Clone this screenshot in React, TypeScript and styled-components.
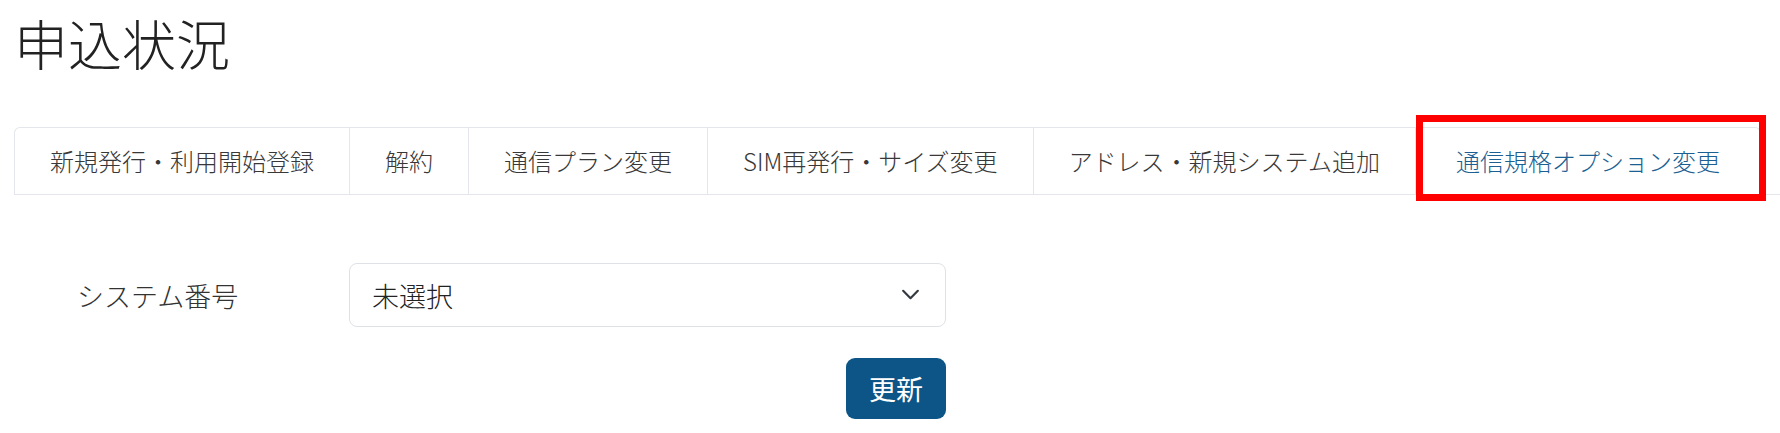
import React, { useState } from "react";
import styled, { createGlobalStyle } from "styled-components";

const tabs = [
  "新規発行・利用開始登録",
  "解約",
  "通信プラン変更",
  "SIM再発行・サイズ変更",
  "アドレス・新規システム追加",
  "通信規格オプション変更",
];

const GlobalStyle = createGlobalStyle`
  body {
    margin: 0;
    background: #fff;
    font-family: "Noto Sans CJK JP", "Noto Sans", sans-serif;
    font-weight: 300;
    color: #333;
  }
`;

export default function App() {
  const [active, setActive] = useState(tabs.length - 1);
  const [system, setSystem] = useState("");

  return (
    <Page>
      <GlobalStyle />
      <Title>申込状況</Title>
      <TabBar>
        {tabs.map((label, i) => (
          <Tab
            key={label}
            $active={i === active}
            $first={i === 0}
            onClick={() => setActive(i)}
          >
            {label}
            {i === active && <Highlight />}
          </Tab>
        ))}
      </TabBar>
      <Form>
        <Label>システム番号</Label>
        <SelectWrap>
          <Select value={system} onChange={(e) => setSystem(e.target.value)}>
            <option value="">未選択</option>
          </Select>
          <Chevron viewBox="0 0 20 12">
            <path d="M2 2l8 8 8-8" />
          </Chevron>
        </SelectWrap>
        <UpdateButton>更新</UpdateButton>
      </Form>
    </Page>
  );
}

const Page = styled.div`
  padding-left: 14px;
`;

const Title = styled.h1`
  margin: 16px 0 57px;
  font-size: 54px;
  line-height: 54px;
  font-weight: 300;
  color: #222;
`;

const TabBar = styled.div`
  display: flex;
  height: 67px;
  border-bottom: 1px solid #e3e6eb;
`;

const Tab = styled.div<{ $active: boolean; $first: boolean }>`
  position: relative;
  display: flex;
  align-items: center;
  padding: 0 ${(p) => (p.$active ? "40px" : "35px")};
  border-top: 1px solid #e3e6eb;
  border-right: 1px solid #e3e6eb;
  border-left: ${(p) => (p.$first ? "1px solid #e3e6eb" : "none")};
  border-radius: ${(p) =>
    p.$first ? "6px 0 0 0" : p.$active ? "0 6px 0 0" : "0"};
  font-size: 24px;
  line-height: 1;
  white-space: nowrap;
  color: ${(p) => (p.$active ? "#1b5f93" : "#383838")};
  cursor: pointer;
`;

const Highlight = styled.span`
  position: absolute;
  left: 0;
  right: -6px;
  top: -13px;
  bottom: -7px;
  border: 7px solid #ff0000;
  pointer-events: none;
`;

const Form = styled.div`
  display: grid;
  grid-template-columns: 272px 597px;
  row-gap: 31px;
  align-items: center;
  margin-top: 68px;
  padding-left: 63px;
`;

const Label = styled.div`
  font-size: 27px;
  line-height: 1;
  color: #333;
`;

const SelectWrap = styled.div`
  position: relative;
`;

const Select = styled.select`
  appearance: none;
  width: 100%;
  height: 64px;
  padding: 0 60px 0 22px;
  border: 1px solid #dee2e6;
  border-radius: 8px;
  background: #fff;
  font-family: inherit;
  font-weight: 300;
  font-size: 27px;
  color: #222;
  outline: none;
`;

const Chevron = styled.svg`
  position: absolute;
  right: 26px;
  top: 26px;
  width: 19px;
  height: 11px;
  fill: none;
  stroke: #343a40;
  stroke-width: 2.4;
  stroke-linecap: round;
  stroke-linejoin: round;
  pointer-events: none;
`;

const UpdateButton = styled.button`
  grid-column: 2;
  justify-self: end;
  width: 100px;
  height: 61px;
  border: none;
  border-radius: 9px;
  background: #0d5587;
  color: #fff;
  font-family: inherit;
  font-weight: 400;
  font-size: 27px;
  cursor: pointer;
`;
